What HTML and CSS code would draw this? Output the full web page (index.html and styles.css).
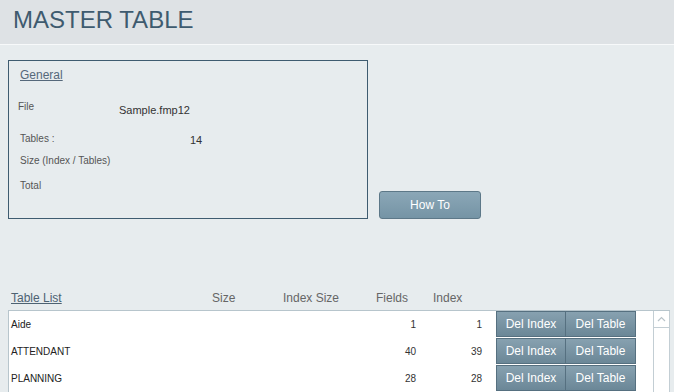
FILE: index.html
```html
<!DOCTYPE html>
<html lang="en">
<head>
    <meta charset="UTF-8">
    <title>Master Table</title>
    <link rel="stylesheet" href="styles.css">
</head>
<body>
    <div class="top-bar">
        <h1>MASTER TABLE</h1>
    </div>

    <div class="info-row">
        <div class="general-box">
            <div class="box-title">General</div>
            <div class="info-line file-line">
                <span class="label file-label">File</span>
                <span class="file-name">Sample.fmp12</span>
            </div>
            <div class="info-line tables-line">
                <span class="label tables-label">Tables :</span>
                <span class="count">14</span>
            </div>
            <div class="info-line size-line">
                <span class="label">Size (Index / Tables)</span>
            </div>
            <div class="info-line total-line">
                <span class="label">Total</span>
            </div>
        </div>
        <button class="how-to-btn">How To</button>
    </div>

    <div class="list-head">
        <span class="head-name">Table List</span>
        <span class="head-size">Size</span>
        <span class="head-isize">Index Size</span>
        <span class="head-fields">Fields</span>
        <span class="head-index">Index</span>
    </div>

    <div class="table-list">
        <div class="rows">
            <div class="row">
                <span class="name">Aide</span>
                <span class="fields">1</span>
                <span class="index">1</span>
                <div class="btn-pair">
                    <button class="del-btn">Del Index</button>
                    <button class="del-btn">Del Table</button>
                </div>
            </div>
            <div class="row">
                <span class="name">ATTENDANT</span>
                <span class="fields">40</span>
                <span class="index">39</span>
                <div class="btn-pair">
                    <button class="del-btn">Del Index</button>
                    <button class="del-btn">Del Table</button>
                </div>
            </div>
            <div class="row">
                <span class="name">PLANNING</span>
                <span class="fields">28</span>
                <span class="index">28</span>
                <div class="btn-pair">
                    <button class="del-btn">Del Index</button>
                    <button class="del-btn">Del Table</button>
                </div>
            </div>
        </div>
        <div class="scrollbar">
            <div class="scroll-up">
                <svg width="9" height="6" viewBox="0 0 9 6"><path d="M1 5 L4.5 1.5 L8 5" fill="none" stroke="#b9c3c9" stroke-width="1.2"/></svg>
            </div>
        </div>
    </div>
</body>
</html>
```

FILE: styles.css
```css
*{
    margin: 0;
    padding: 0;
    box-sizing: border-box;
    font-family: "Liberation Sans", Arial, Helvetica, sans-serif;
}
body{
    background-color: #e7ecee;
    height: 392px;
    overflow: hidden;
}
.top-bar{
    height: 45px;
    background-color: #dee2e5;
    border-bottom: 1px solid #f7f9fa;
    padding-left: 13px;
}
h1{
    font-size: 24px;
    font-weight: normal;
    color: #3e5b6f;
    line-height: 40px;
}
.info-row{
    display: flex;
    align-items: flex-end;
    gap: 11px;
    margin: 15px 0 0 8px;
}
.general-box{
    width: 360px;
    height: 159px;
    border: 1px solid #3f5c70;
    padding: 7px 0 0 11px;
}
.box-title{
    font-size: 12px;
    line-height: 14px;
    color: #55687a;
    text-decoration: underline;
}
.info-line{
    display: flex;
    font-size: 10px;
    line-height: 14px;
}
.label{
    color: #555;
}
.file-line{
    margin-top: 18px;
}
.file-label{
    margin-left: -2px;
    width: 101px;
}
.file-name{
    font-size: 11px;
    color: #333;
    padding-top: 3px;
}
.tables-line{
    margin-top: 15px;
}
.tables-label{
    width: 170px;
}
.count{
    font-size: 11px;
    color: #333;
    padding-top: 1px;
}
.size-line{
    margin-top: 7px;
}
.total-line{
    margin-top: 11px;
}
.how-to-btn{
    width: 102px;
    height: 28px;
    font-size: 12px;
    color: #fff;
    background: linear-gradient(#8ba7b7, #7594a5);
    border: 1px solid #5d7888;
    border-radius: 3px;
}
.list-head{
    display: flex;
    margin: 72px 0 5px 11px;
    font-size: 12px;
    line-height: 14px;
    color: #666;
}
.head-name{
    width: 201px;
    color: #4d6272;
    text-decoration: underline;
}
.head-size{
    width: 71px;
}
.head-isize{
    width: 93px;
}
.head-fields{
    width: 57px;
}
.table-list{
    display: flex;
    margin-left: 8px;
    width: 662px;
    height: 82px;
    overflow: hidden;
    background-color: #fff;
    border: 1px solid #b7c5cc;
    border-right: none;
    border-bottom: none;
}
.rows{
    flex: 1;
}
.row{
    display: flex;
    align-items: center;
    height: 27px;
    font-size: 10px;
    color: #222;
}
.name{
    width: 340px;
    padding-left: 2px;
}
.fields,
.index{
    text-align: right;
    color: #333;
}
.fields{
    width: 67px;
}
.index{
    width: 66px;
}
.btn-pair{
    display: flex;
    margin-left: 14px;
    height: 26px;
    align-self: flex-start;
}
.del-btn{
    width: 70px;
    height: 26px;
    font-size: 12px;
    color: #fff;
    background: linear-gradient(#87a1b0, #6b8797);
    border: 1px solid #567080;
}
.del-btn + .del-btn{
    border-left: none;
}
.scrollbar{
    width: 17px;
    border-left: 1px solid #c3ced4;
    border-right: 1px solid #c3ced4;
}
.scroll-up{
    height: 17px;
    border-bottom: 1px solid #c3ced4;
    display: flex;
    justify-content: center;
    align-items: center;
}
```
